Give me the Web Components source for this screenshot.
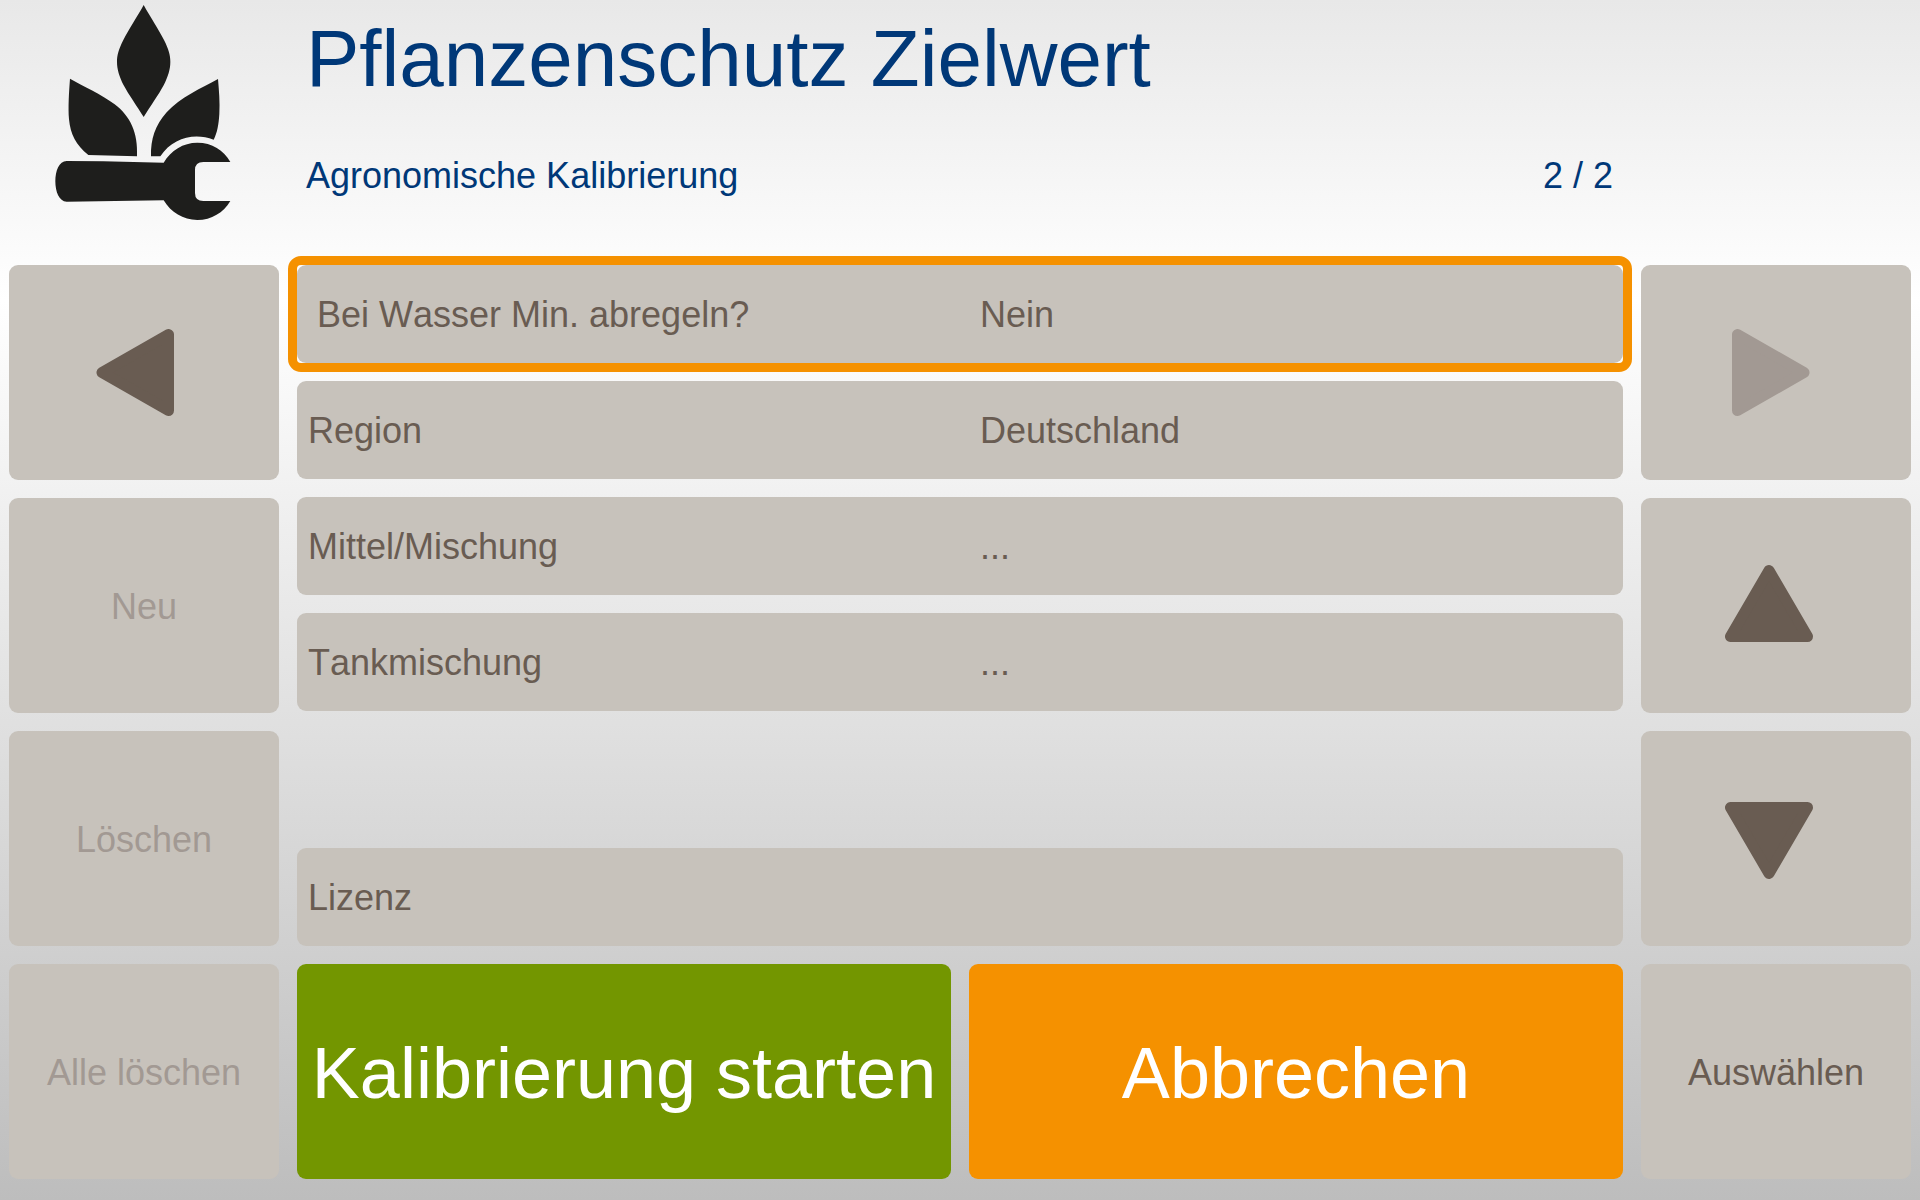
<!DOCTYPE html>
<html lang="de">
<head>
<meta charset="utf-8">
<title>Pflanzenschutz Zielwert</title>
<style>
  html, body { margin: 0; height: 100%; }
  body { font-family: "Liberation Sans", Arial, sans-serif; font-kerning: none; }
</style>
</head>
<body>
<terminal-screen>
  <screen-header slot="header" page="2 / 2">
    <terminal-logo slot="logo"></terminal-logo>
    <span slot="title">Pflanzenschutz Zielwert</span>
    <span slot="subtitle">Agronomische Kalibrierung</span>
  </screen-header>

  <soft-key slot="left" arrow="left" label="Zurück"></soft-key>
  <soft-key slot="left" disabled>Neu</soft-key>
  <soft-key slot="left" disabled>Löschen</soft-key>
  <soft-key slot="left" disabled>Alle löschen</soft-key>

  <setting-row slot="settings" selected>Bei Wasser Min. abregeln?<span slot="value">Nein</span></setting-row>
  <setting-row slot="settings">Region<span slot="value">Deutschland</span></setting-row>
  <setting-row slot="settings">Mittel/Mischung<span slot="value">...</span></setting-row>
  <setting-row slot="settings">Tankmischung<span slot="value">...</span></setting-row>
  <setting-row slot="license">Lizenz</setting-row>

  <soft-key slot="actions" variant="start">Kalibrierung starten</soft-key>
  <soft-key slot="actions" variant="cancel">Abbrechen</soft-key>

  <soft-key slot="right" arrow="right" label="Weiter" disabled></soft-key>
  <soft-key slot="right" arrow="up" label="Nach oben"></soft-key>
  <soft-key slot="right" arrow="down" label="Nach unten"></soft-key>
  <soft-key slot="right">Auswählen</soft-key>
</terminal-screen>

<script>
class TerminalScreen extends HTMLElement {
  constructor() {
    super();
    this.attachShadow({ mode: "open" }).innerHTML = `
      <style>
        :host {
          --tile: #c7c2bb; --ink: #695c52; --ink-off: #a29993;
          --orange: #f59100; --green: #739600; --navy: #003878;
          --side: 270px; --gap: 18px;
          display: grid; box-sizing: border-box; min-height: 100vh;
          grid-template: 247px 1fr / var(--side) 1fr var(--side);
          gap: var(--gap); padding: 0 9px 21px;
          background: linear-gradient(#e8e8e8 0%, #ffffff 25%, #bdbdbd 100%);
        }
        header { grid-column: 1 / -1; }
        nav, main, .keys { display: grid; gap: var(--gap); }
        nav { grid-template-rows: repeat(4, 1fr); }
        main { grid-template-rows: 1fr calc((100% - 3 * var(--gap)) / 4); min-width: 0; }
        .list { display: flex; flex-direction: column; gap: var(--gap); }
        .license { margin-top: auto; }
        .keys { grid-template-columns: 1fr 1fr; }
      </style>
      <header><slot name="header"></slot></header>
      <nav><slot name="left"></slot></nav>
      <main>
        <div class="list">
          <slot name="settings"></slot>
          <div class="license"><slot name="license"></slot></div>
        </div>
        <div class="keys"><slot name="actions"></slot></div>
      </main>
      <nav><slot name="right"></slot></nav>`;
  }
}

class ScreenHeader extends HTMLElement {
  constructor() {
    super();
    this.attachShadow({ mode: "open" }).innerHTML = `
      <style>
        :host {
          display: grid; grid-template-columns: var(--side) 1fr var(--side);
          gap: var(--gap); color: var(--navy);
        }
        .text { padding: 0 10px 0 9px; }
        h1 { margin: 0 0 38px; font-size: 80px; line-height: 118px; font-weight: 400; white-space: nowrap; }
        .sub { display: flex; justify-content: space-between; font-size: 36px; line-height: 40px; }
        p { margin: 0; }
      </style>
      <slot name="logo"></slot>
      <div class="text">
        <h1><slot name="title"></slot></h1>
        <div class="sub"><p><slot name="subtitle"></slot></p><p class="page"></p></div>
      </div>`;
  }
  connectedCallback() {
    this.shadowRoot.querySelector(".page").textContent = this.getAttribute("page");
  }
}

class TerminalLogo extends HTMLElement {
  constructor() {
    super();
    this.attachShadow({ mode: "open" }).innerHTML = `
      <style>
        :host { display: block; }
        svg { display: block; width: 100%; fill: #1e1e1c; }
      </style>
      <svg viewBox="-93 0 810 720" aria-hidden="true">
        <path d="M311 15C333 55 356 88 372 120C386 148 391 166 391 186C391 208 384 230 371 256C356 284 331 319 311 351C291 319 266 284 251 256C238 230 231 208 231 186C231 166 236 148 250 120C266 88 289 55 311 15Z"/>
        <path d="M90 236C128 258 185 283 224 313C270 348 295 398 291 469L145 465C108 436 91 402 87 358C84 322 87 275 90 236Z"/>
        <path d="M534 237C537 274 540 306 538 342C536 374 532 397 521 419C463 397 398 413 361 469H333C332 418 345 376 380 337C421 291 484 265 534 237Z"/>
        <path d="M80 483L190 484L371 488C393 451 429 428 472 428C516 428 551 450 571 486H490Q465 486 465 510V579Q465 603 490 603H571C550 638 515 660 472 660C429 660 393 637 371 601L80 605C57 605 46 575 46 544C46 513 57 483 80 483Z"/>
      </svg>`;
  }
}

const ARROWS = {
  left: "93,107.5 159.5,69.5 159.5,145.5",
  right: "163,107.5 96.5,69.5 96.5,145.5",
  up: "128,72.5 89.5,138.5 166.5,138.5",
  down: "128,142.5 89.5,76.5 166.5,76.5"
};

class SoftKey extends HTMLElement {
  constructor() {
    super();
    this.attachShadow({ mode: "open" }).innerHTML = `
      <style>
        :host { display: grid; min-width: 0; }
        button {
          display: flex; align-items: center; justify-content: center;
          min-width: 0; margin: 0; padding: 2px 0 0; border: 0; border-radius: 9px;
          background: var(--tile); color: var(--ink);
          font: 36px/40px "Liberation Sans", Arial, sans-serif; font-kerning: none; white-space: nowrap;
        }
        button:disabled { color: var(--ink-off); }
        :host([arrow]) button { padding: 0; }
        :host([variant]) button { color: #fff; font-size: 72px; line-height: 80px; }
        :host([variant="start"]) button { background: var(--green); }
        :host([variant="cancel"]) button { background: var(--orange); }
        svg { display: block; width: 100%; }
        polygon { fill: currentColor; stroke: currentColor; stroke-width: 11; stroke-linejoin: round; }
      </style>
      <button type="button"><slot></slot></button>`;
  }
  connectedCallback() {
    const button = this.shadowRoot.querySelector("button");
    button.disabled = this.hasAttribute("disabled");
    const arrow = this.getAttribute("arrow");
    if (arrow) {
      button.setAttribute("aria-label", this.getAttribute("label"));
      button.innerHTML = `<svg viewBox="0 0 270 215" aria-hidden="true"><polygon points="${ARROWS[arrow]}"/></svg>`;
    }
  }
}

class SettingRow extends HTMLElement {
  constructor() {
    super();
    this.attachShadow({ mode: "open" }).innerHTML = `
      <style>
        :host { display: block; position: relative; }
        button {
          display: grid; grid-template-columns: 1fr 1fr; align-items: center;
          width: 100%; height: 98px; margin: 0; padding: 2px 0 0; border: 0; border-radius: 9px;
          background: var(--tile); color: var(--ink); text-align: left;
          font: 36px/40px "Liberation Sans", Arial, sans-serif; font-kerning: none;
        }
        .label { padding-left: 11px; }
        .value { padding-left: 20px; }
        :host([selected]) .label { padding-left: 20px; }
        :host([selected])::after {
          content: ""; position: absolute; inset: -9px; pointer-events: none;
          border: 9px solid var(--orange); border-radius: 13px;
        }
      </style>
      <button type="button">
        <span class="label"><slot></slot></span>
        <span class="value"><slot name="value"></slot></span>
      </button>`;
  }
}

customElements.define("terminal-screen", TerminalScreen);
customElements.define("screen-header", ScreenHeader);
customElements.define("terminal-logo", TerminalLogo);
customElements.define("soft-key", SoftKey);
customElements.define("setting-row", SettingRow);
</script>
</body>
</html>
